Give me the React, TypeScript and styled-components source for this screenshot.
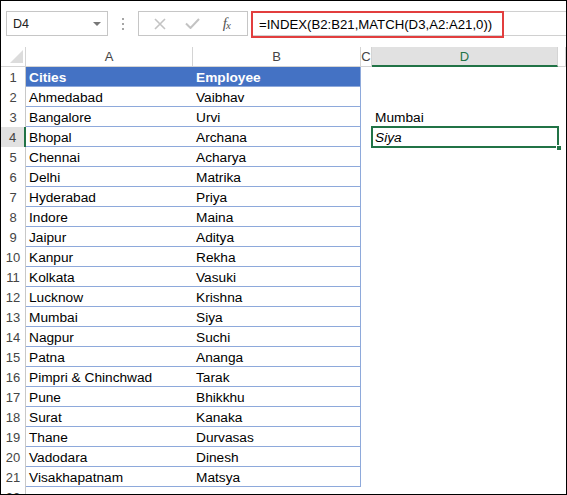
import React from "react"
import styled, { createGlobalStyle } from "styled-components"

const GlobalStyle = createGlobalStyle`
  html, body {
    margin: 0;
    padding: 0;
    background: #ffffff;
  }
  * {
    box-sizing: border-box;
  }
`

const COLS = "25px 167px 168px 11px 186px 1fr"
const TABLE_LINE = "#8ea9db"
const HEAD_LINE = "#d4d4d4"
const GREEN = "#217346"

const Frame = styled.div`
  width: 567px;
  height: 495px;
  border: 1px solid #000000;
  background: #ffffff;
  display: flex;
  flex-direction: column;
  overflow: hidden;
  font-family: "Liberation Sans", Arial, sans-serif;
  color: #000000;
`

const Toolbar = styled.div`
  height: 46px;
  flex: none;
  display: flex;
  align-items: flex-start;
  padding: 10px 0 0 5px;
`

const NameBox = styled.div`
  width: 102px;
  height: 25px;
  border: 1px solid #c6c6c6;
  display: flex;
  align-items: center;
  justify-content: space-between;
  padding: 0 6px 0 6px;
  font-size: 12.5px;
  color: #222222;
`

const DropArrow = styled.span`
  width: 0;
  height: 0;
  border-left: 4px solid transparent;
  border-right: 4px solid transparent;
  border-top: 4px solid #777777;
`

const Grip = styled.div`
  width: 30px;
  height: 25px;
  display: flex;
  flex-direction: column;
  align-items: center;
  justify-content: center;
  gap: 3px;
`

const GripDot = styled.span`
  width: 2px;
  height: 2px;
  background: #a6a6a6;
`

const ButtonBox = styled.div`
  width: 110px;
  height: 25px;
  border: 1px solid #c6c6c6;
  display: flex;
  align-items: center;
  justify-content: space-around;
  padding: 0 4px;
`

const IconButton = styled.span`
  width: 28px;
  display: flex;
  align-items: center;
  justify-content: center;
`

const Fx = styled.span`
  font-family: "Liberation Serif", "Times New Roman", serif;
  font-style: italic;
  font-size: 15px;
  color: #555555;
  letter-spacing: -1px;

  sub {
    font-size: 11px;
    vertical-align: baseline;
    position: relative;
    top: 1px;
  }
`

const FormulaField = styled.div`
  flex: 1;
  height: 25px;
  margin-left: 3px;
  border: 1px solid #d0d0d0;
  border-right: none;
  display: flex;
  align-items: stretch;
`

const Highlight = styled.div`
  margin: -1px 0 -1px -1px;
  height: 27px;
  border: 2px solid #e23e3e;
  display: flex;
  align-items: center;
  padding: 0 10px 0 6px;
  font-size: 13.2px;
  color: #000000;
  white-space: nowrap;
`

const Sheet = styled.div`
  flex: 1;
  overflow: hidden;
`

const Line = styled.div`
  display: grid;
  grid-template-columns: ${COLS};
  height: 20px;
`

const Corner = styled.div`
  border-right: 1px solid ${HEAD_LINE};
  border-bottom: 1px solid ${HEAD_LINE};
  display: flex;
  align-items: flex-end;
  justify-content: flex-end;
  padding: 0 2px 3px 0;
`

const ColHead = styled.div<{ $active?: boolean }>`
  border-right: 1px solid ${HEAD_LINE};
  border-bottom: ${(p) => (p.$active ? `2px solid ${GREEN}` : `1px solid ${HEAD_LINE}`)};
  background: ${(p) => (p.$active ? "#e1e1e1" : "#ffffff")};
  color: ${(p) => (p.$active ? GREEN : "#444444")};
  font-size: 13px;
  display: flex;
  align-items: center;
  justify-content: center;
  overflow: hidden;
  white-space: nowrap;
`

const RowHead = styled.div<{ $active?: boolean }>`
  border-right: ${(p) => (p.$active ? `2px solid ${GREEN}` : `1px solid #c8c8c8`)};
  background: ${(p) => (p.$active ? "#e1e1e1" : "#ffffff")};
  color: #444444;
  font-size: 13px;
  display: flex;
  align-items: center;
  justify-content: center;
`

type CellKind = "title" | "body" | "plain"

const Cell = styled.div<{ $kind: CellKind; $edge?: boolean; $italic?: boolean; $selected?: boolean }>`
  position: relative;
  display: flex;
  align-items: center;
  padding: 1px 0 0 3px;
  font-size: 13.7px;
  white-space: nowrap;
  overflow: visible;
  background: ${(p) => (p.$kind === "title" ? "#4472c4" : "transparent")};
  color: ${(p) => (p.$kind === "title" ? "#ffffff" : "#000000")};
  font-weight: ${(p) => (p.$kind === "title" ? 700 : 400)};
  font-style: ${(p) => (p.$italic ? "italic" : "normal")};
  border-bottom: ${(p) => (p.$kind === "plain" ? "none" : `1px solid ${TABLE_LINE}`)};
  border-right: ${(p) => (p.$edge ? `1px solid ${TABLE_LINE}` : "none")};
  outline: ${(p) => (p.$selected ? `2px solid ${GREEN}` : "none")};
  outline-offset: -1px;
`

const FillHandle = styled.span`
  position: absolute;
  right: -4px;
  bottom: -4px;
  width: 6px;
  height: 6px;
  background: ${GREEN};
  border: 1px solid #ffffff;
`

const rows: [string, string][] = [
  ["Cities", "Employee"],
  ["Ahmedabad", "Vaibhav"],
  ["Bangalore", "Urvi"],
  ["Bhopal", "Archana"],
  ["Chennai", "Acharya"],
  ["Delhi", "Matrika"],
  ["Hyderabad", "Priya"],
  ["Indore", "Maina"],
  ["Jaipur", "Aditya"],
  ["Kanpur", "Rekha"],
  ["Kolkata", "Vasuki"],
  ["Lucknow", "Krishna"],
  ["Mumbai", "Siya"],
  ["Nagpur", "Suchi"],
  ["Patna", "Ananga"],
  ["Pimpri & Chinchwad", "Tarak"],
  ["Pune", "Bhikkhu"],
  ["Surat", "Kanaka"],
  ["Thane", "Durvasas"],
  ["Vadodara", "Dinesh"],
  ["Visakhapatnam", "Matsya"],
]

const lookup: Record<number, { text: string; italic?: boolean; selected?: boolean }> = {
  3: { text: "Mumbai" },
  4: { text: "Siya", italic: true, selected: true },
}

function App() {
  return (
    <>
      <GlobalStyle />
      <Frame>
        <Toolbar>
          <NameBox>
            D4
            <DropArrow />
          </NameBox>
          <Grip>
            <GripDot />
            <GripDot />
            <GripDot />
          </Grip>
          <ButtonBox>
            <IconButton>
              <svg width="12" height="12" viewBox="0 0 12 12">
                <path d="M1 1 L11 11 M11 1 L1 11" stroke="#c3c3c3" strokeWidth="1.6" fill="none" />
              </svg>
            </IconButton>
            <IconButton>
              <svg width="15" height="11" viewBox="0 0 15 11">
                <path d="M1 5.5 L5.5 10 L14 1" stroke="#c3c3c3" strokeWidth="2" fill="none" />
              </svg>
            </IconButton>
            <IconButton>
              <Fx>
                f<sub>x</sub>
              </Fx>
            </IconButton>
          </ButtonBox>
          <FormulaField>
            <Highlight>=INDEX(B2:B21,MATCH(D3,A2:A21,0))</Highlight>
          </FormulaField>
        </Toolbar>
        <Sheet>
          <Line>
            <Corner>
              <svg width="13" height="13" viewBox="0 0 13 13">
                <path d="M13 0 L13 13 L0 13 Z" fill="#dcdcdc" />
              </svg>
            </Corner>
            <ColHead>A</ColHead>
            <ColHead>B</ColHead>
            <ColHead>C</ColHead>
            <ColHead $active>D</ColHead>
            <ColHead />
          </Line>
          {rows.map(([city, name], i) => {
            const n = i + 1
            const kind: CellKind = n === 1 ? "title" : "body"
            const d = lookup[n]
            return (
              <Line key={n}>
                <RowHead $active={n === 4}>{n}</RowHead>
                <Cell $kind={kind}>{city}</Cell>
                <Cell $kind={kind} $edge>
                  {name}
                </Cell>
                <Cell $kind="plain" />
                <Cell $kind="plain" $italic={d?.italic} $selected={d?.selected}>
                  {d?.text}
                  {d?.selected && <FillHandle />}
                </Cell>
                <Cell $kind="plain" />
              </Line>
            )
          })}
          <Line>
            <RowHead>22</RowHead>
          </Line>
        </Sheet>
      </Frame>
    </>
  )
}

export default App
